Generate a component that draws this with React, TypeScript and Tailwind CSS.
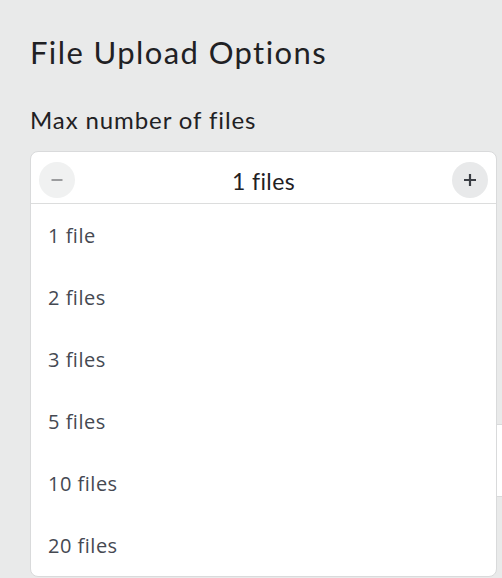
import React from "react";

const items = ["1 file", "2 files", "3 files", "5 files", "10 files", "20 files"];

export default function App() {
  return (
    <div className="relative h-[578px] w-[502px] overflow-hidden bg-[#e9eaea] font-['Lato',sans-serif] text-[#1f2124] [font-variant-ligatures:none]">
      <div className="pl-[30px] pt-[34px]">
        <h1 className="text-[31px] leading-[36px] font-normal tracking-[1.4px]">File Upload Options</h1>
        <div className="mt-[36px] text-[24px] leading-[28px] tracking-[0.9px]">Max number of files</div>
        <div className="relative mt-[17px]">
          <div className="h-[53px]" />
          <div className="mt-[220px] h-[73px] border-y border-[#d9dadb] bg-white" />
          <div className="absolute left-0 top-0 w-[467px] overflow-hidden rounded-[8px] border border-[#d9dadb] bg-white">
            <div className="flex h-[52px] items-center justify-between border-b border-[#dcdddd] px-[8px] pt-[4px]">
              <button className="flex h-[36px] w-[36px] items-center justify-center rounded-full bg-[#f0f1f1]">
                <svg width="16" height="16" viewBox="0 0 16 16">
                  <path d="M2.5 8h11" stroke="#9b9c9e" strokeWidth="2.2" strokeLinecap="butt" />
                </svg>
              </button>
              <span className="pt-[3px] text-[23px] leading-none tracking-[0.4px]">1 files</span>
              <button className="flex h-[36px] w-[36px] items-center justify-center rounded-full bg-[#e8e9ea]">
                <svg width="16" height="16" viewBox="0 0 16 16">
                  <path d="M2 8h12M8 2v12" stroke="#3b3e44" strokeWidth="2.2" strokeLinecap="butt" />
                </svg>
              </button>
            </div>
            <ul className="font-['Open_Sans',sans-serif] text-[20px] tracking-[0.5px] text-[#454952]">
              {items.map((t) => (
                <li key={t} className="flex h-[62px] items-center pl-[17px] pt-[1px]">
                  {t}
                </li>
              ))}
            </ul>
          </div>
        </div>
      </div>
    </div>
  );
}
